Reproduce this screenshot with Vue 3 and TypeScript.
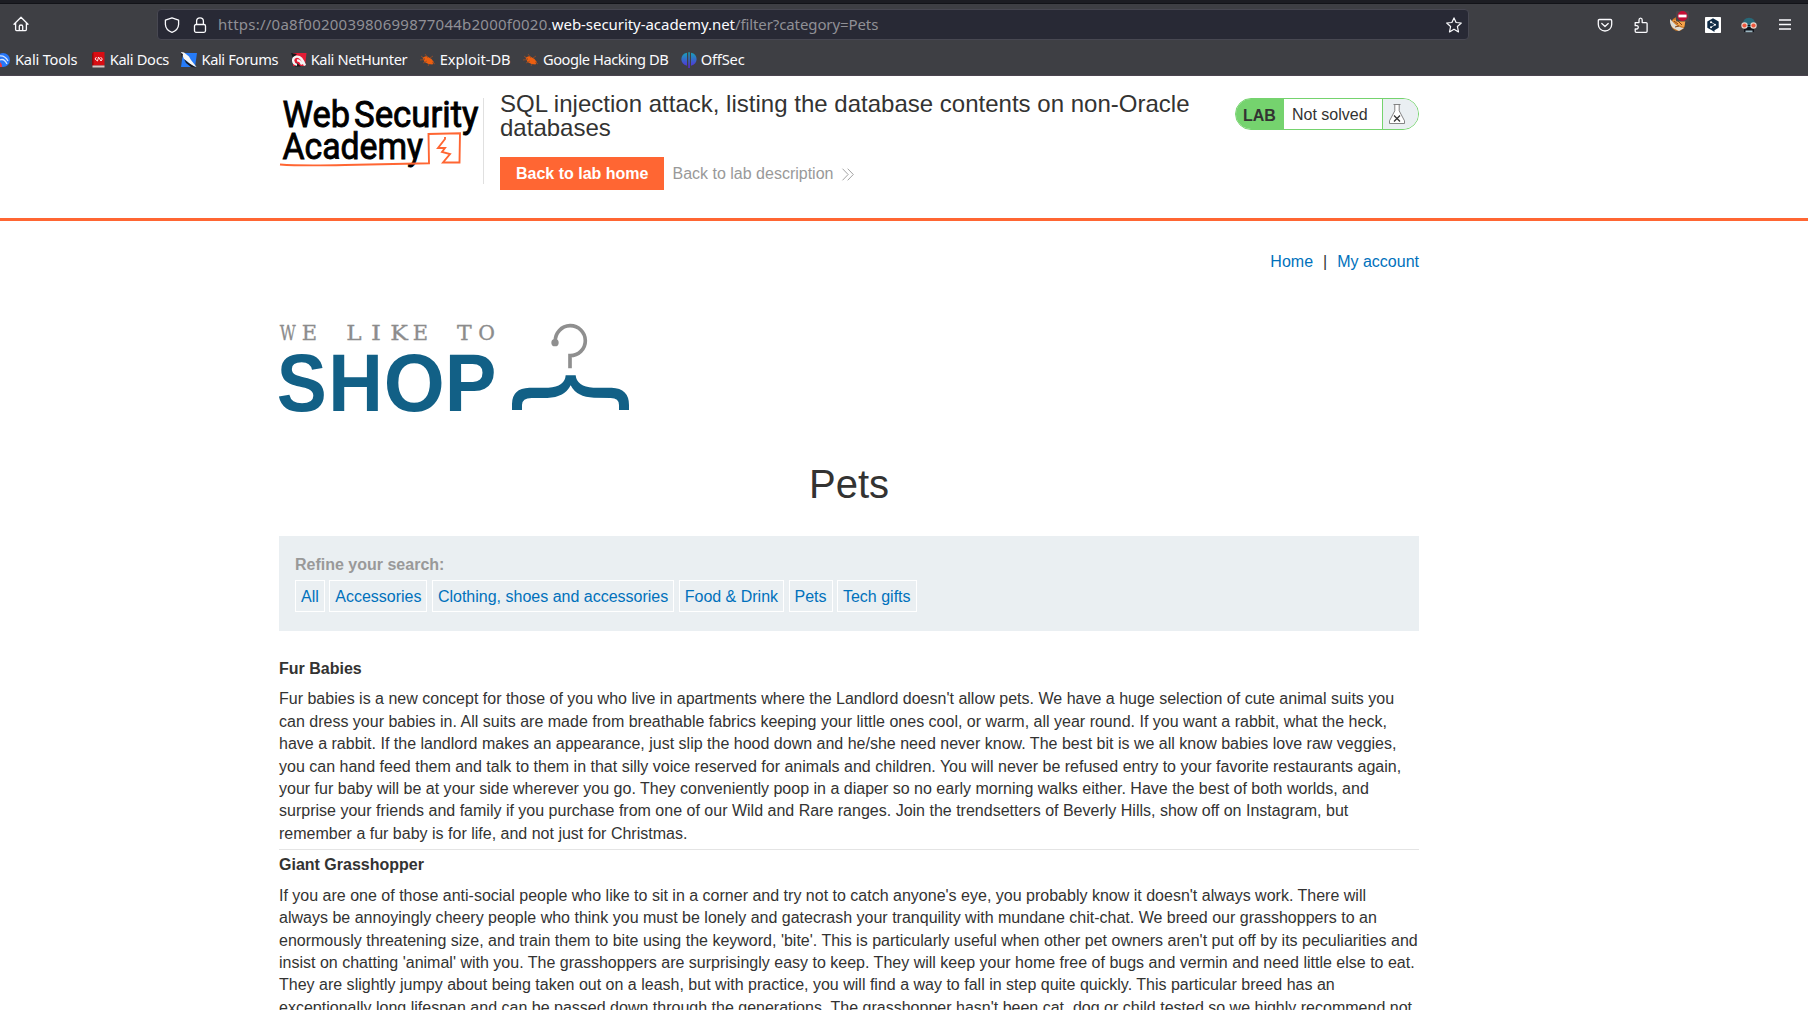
<script setup lang="ts">
interface Bookmark { label: string; icon: string; tracking: number }
interface Product { name: string; description: string }
interface Glyph { ch: string; x: number; w: number }

const bookmarks: Bookmark[] = [
  { label: 'Kali Tools', icon: 'tools', tracking: -0.2 },
  { label: 'Kali Docs', icon: 'docs', tracking: -0.33 },
  { label: 'Kali Forums', icon: 'forums', tracking: -0.38 },
  { label: 'Kali NetHunter', icon: 'nethunter', tracking: -0.38 },
  { label: 'Exploit-DB', icon: 'bug', tracking: -0.07 },
  { label: 'Google Hacking DB', icon: 'bug', tracking: -0.46 },
  { label: 'OffSec', icon: 'offsec', tracking: -0.15 },
]

const categories: string[] = ['All', 'Accessories', 'Clothing, shoes and accessories', 'Food & Drink', 'Pets', 'Tech gifts']

const tagline: Glyph[] = [
  { ch: 'W', x: 29, w: 48 }, { ch: 'E', x: 95, w: 46 }, { ch: 'L', x: 229, w: 46 }, { ch: 'I', x: 303, w: 30 },
  { ch: 'K', x: 361, w: 53 }, { ch: 'E', x: 428, w: 46 }, { ch: 'T', x: 561, w: 44 }, { ch: 'O', x: 625, w: 50 },
]

const wordmark: Glyph[] = [
  { ch: 'S', x: 20, w: 150 }, { ch: 'H', x: 175, w: 164 }, { ch: 'O', x: 341, w: 183 }, { ch: 'P', x: 524, w: 155 },
]

const products: Product[] = [
  {
    name: 'Fur Babies',
    description: "Fur babies is a new concept for those of you who live in apartments where the Landlord doesn't allow pets. We have a huge selection of cute animal suits you can dress your babies in. All suits are made from breathable fabrics keeping your little ones cool, or warm, all year round. If you want a rabbit, what the heck, have a rabbit. If the landlord makes an appearance, just slip the hood down and he/she need never know. The best bit is we all know babies love raw veggies, you can hand feed them and talk to them in that silly voice reserved for animals and children. You will never be refused entry to your favorite restaurants again, your fur baby will be at your side wherever you go. They conveniently poop in a diaper so no early morning walks either. Have the best of both worlds, and surprise your friends and family if you purchase from one of our Wild and Rare ranges. Join the trendsetters of Beverly Hills, show off on Instagram, but remember a fur baby is for life, and not just for Christmas.",
  },
  {
    name: 'Giant Grasshopper',
    description: "If you are one of those anti-social people who like to sit in a corner and try not to catch anyone's eye, you probably know it doesn't always work. There will always be annoyingly cheery people who think you must be lonely and gatecrash your tranquility with mundane chit-chat. We breed our grasshoppers to an enormously threatening size, and train them to bite using the keyword, 'bite'. This is particularly useful when other pet owners aren't put off by its peculiarities and insist on chatting 'animal' with you. The grasshoppers are surprisingly easy to keep. They will keep your home free of bugs and vermin and need little else to eat. They are slightly jumpy about being taken out on a leash, but with practice, you will find a way to fall in step quite quickly. This particular breed has an exceptionally long lifespan and can be passed down through the generations. The grasshopper hasn't been cat, dog or child tested so we highly recommend not",
  },
]
</script>

<template>
  <div class="window">
    <div class="chrome">
      <div class="toolbar">
        <div class="home-btn">
          <svg width="16" height="16" viewBox="0 0 16 16" fill="none" stroke="#fbfbfe" stroke-width="1.3" stroke-linejoin="round" stroke-linecap="round">
            <path d="M1 8.2 8 1.2l7 7M2.6 7v6.6q0 1 1 1h8.800q1 0 1-1V7M6.300 14.500V10.300q0-1.300 1.700-1.300t1.700 1.300v4.200" />
          </svg>
        </div>
        <div class="urlbar">
          <svg class="shield" width="16" height="16" viewBox="0 0 16 16" fill="none" stroke="#fbfbfe" stroke-width="1.300" stroke-linejoin="round">
            <path d="M8 .8 14.600 3.200V7.500C14.400 11 12 13.900 8 15.300 4 13.900 1.600 11 1.400 7.500V3.200Z" />
          </svg>
          <svg class="lock" width="16" height="16" viewBox="0 0 16 16" fill="none" stroke="#fbfbfe" stroke-width="1.300" stroke-linejoin="round">
            <rect x="2.500" y="7.500" width="11" height="7.800" rx="1.500" />
            <path d="M4.600 7.500V4.200a3.400 3.400 0 0 1 6.800 0v3.300" />
          </svg>
          <div class="url"><span class="sub">https://0a8f002003980699877044b2000f0020.</span><b>web-security-academy.net</b><span class="path">/filter?category=Pets</span></div>
          <svg class="star" width="16" height="16" viewBox="0 0 16 16" fill="none" stroke="#fbfbfe" stroke-width="1.200" stroke-linejoin="round">
            <path d="M8 .9 10.100 5.500 15.300 6 11.400 9.500 12.500 14.900 8 12.200 3.500 14.900 4.600 9.500.7 6 5.900 5.500Z" />
          </svg>
        </div>
        <div class="actions">
          <span class="action">
            <svg width="16" height="16" viewBox="0 0 16 16" fill="none" stroke="#fbfbfe" stroke-width="1.300" stroke-linecap="round" stroke-linejoin="round">
              <path d="M2.500 2.500h11q1.200 0 1.200 1.200V7.500a6.700 6.500 0 0 1-13.400 0V3.700q0-1.200 1.200-1.200ZM4.800 6.500 8 9.500l3.200-3" />
            </svg>
          </span>
          <span class="action">
            <svg class="puzzle" width="16" height="16" viewBox="0 0 16 16" fill="none" stroke="#fbfbfe" stroke-width="1.300" stroke-linejoin="round">
              <path d="M2.200 5.600H6V3a1.600 1.900 0 0 1 3.200 0V5.600h3.900q1 0 1 1v7.700q0 1-1 1H3.200q-1 0-1-1V12H4a1.700 1.700 0 0 0 0-3.300H2.200Z" />
            </svg>
          </span>
          <span class="action">
            <svg class="fox" width="20" height="22" viewBox="0 0 20 22">
              <circle cx="9" cy="13" r="7" fill="#c97724" />
              <path d="M1 8q-.5 6 3 9l6 3 5-3q-6-1-9-4Z" fill="#dedbd4" />
              <path d="M4 9q2 5 11 7l2-8Z" fill="#f5a34a" />
              <path d="m5 10 4 3M9 10l4 4m-7 2 4-1" stroke="#7d4116" stroke-width="1" />
              <rect x="7" y="0" width="13" height="10.500" rx="1" fill="#4a4649" />
              <circle cx="13.500" cy="5" r="5" fill="#c50d35" />
              <rect x="9.500" y="3.600" width="8" height="2.800" fill="#fff" />
            </svg>
          </span>
          <span class="action">
            <svg width="16" height="16" viewBox="0 0 16 16">
              <rect width="16" height="16" rx=".7" fill="#fff" />
              <path d="m8 1.200 5.700 3.200v6.400L9.500 13.200V15L6.800 13.300 2.300 10.800V4.400Z" fill="#0f2b46" />
              <path d="m6 5 4 2.700-4 2.700" stroke="#fff" stroke-width=".7" fill="none" />
              <g fill="#fff"><circle cx="6" cy="5.200" r="1" /><circle cx="10" cy="7.700" r="1" /><circle cx="6" cy="10.300" r="1" /></g>
            </svg>
          </span>
          <span class="action">
            <svg width="16" height="16" viewBox="0 0 16 16">
              <path d="M1.700 8Q2 .8 8 .8T14.300 8l-.6 3H2.300Z" fill="#276878" />
              <path d="M3 10h10v5H3Z" fill="#11151c" />
              <path d="M4.500 13.500h7v1.700h-7Z" fill="#9db7c2" />
              <circle cx="3.500" cy="8.500" r="3.200" fill="#e8d4ca" /><circle cx="12.500" cy="8.500" r="3.200" fill="#e8d4ca" />
              <circle cx="3.500" cy="8.500" r="2.100" fill="#ee583f" /><circle cx="12.500" cy="8.500" r="2.100" fill="#ee583f" />
              <path d="M6.700 8h2.600v1H6.700Z" fill="#11151c" />
            </svg>
          </span>
          <span class="action">
            <svg width="16" height="16" viewBox="0 0 16 16" stroke="#fbfbfe" stroke-width="1.300">
              <path d="M2 3h12M2 7.500h12M2 12h12" />
            </svg>
          </span>
        </div>
      </div>

      <div class="bookmarks">
        <span v-for="b in bookmarks" :key="b.label" class="bookmark">
          <svg v-if="b.icon === 'tools'" width="16" height="16" viewBox="0 0 16 16">
            <circle cx="8" cy="8" r="7" fill="#2777f8" />
            <path d="M4 4q6-1 9 5M5 8q4-2 7 4" stroke="#d5e5ff" stroke-width="1.300" fill="none" />
            <path d="M2 10q5-1 5 5H2Z" fill="#f0383f" />
          </svg>
          <svg v-else-if="b.icon === 'docs'" width="16" height="16" viewBox="0 0 16 16">
            <path d="M3.500 0H14.500v13.500H2V2Z" fill="#d90d13" />
            <path d="M2 1.500 3.500 0v13.500H2Z" fill="#8d090d" />
            <path d="M2.500 13.500h12V15.500h-12Z" fill="#d8c8c5" />
            <path d="M6.500 5 5 7l2.500 2 1-4 2.500 4 1.300-2L10.500 5" stroke="#fff" stroke-width=".9" fill="none" />
          </svg>
          <svg v-else-if="b.icon === 'forums'" width="16" height="16" viewBox="0 0 16 16">
            <path d="M2 1h14l-2 14H0Z" fill="#267bf8" />
            <path d="m0 0 3 .5 5 4L10 8l5.500 7Q10 14 7 10L3 7Z" fill="#f5f5f5" />
            <path d="m0 1 2 1-1 4ZM3 7l4 3.500 8 5-5-.500-5-4Z" fill="#18191d" />
          </svg>
          <svg v-else-if="b.icon === 'nethunter'" width="16" height="16" viewBox="0 0 16 16">
            <path d="M2 1h13.500l-1.500 13H2Z" fill="#e31c35" />
            <path d="m0 1 6 1-4 4Zm5.500 9.500 4.500 4H4Z" fill="#17181b" />
            <path d="M6 12.800C1 11.500.8 5.500 5.500 4.600c4-.6 6 3 8.500 8.900M6 8.500q3-.5 5 4" stroke="#f4f4f4" stroke-width="2.300" fill="none" />
          </svg>
          <svg v-else-if="b.icon === 'bug'" width="16" height="16" viewBox="0 0 16 16">
            <path d="m2.500 5.500 4-1.500 5 3 2.300 3-1.300 2.500-4-.5-4-2Z" fill="#ec5f10" />
            <path d="m1 4 4 3M0 8l5-.5M5 2l3 4M3 11l4-2m3-3 3-2m-4 8-1 2m4-4 3 2" stroke="#9c4d25" stroke-width=".8" />
          </svg>
          <svg v-else width="16" height="16" viewBox="0 0 16 16">
            <defs><linearGradient id="offsec" x1="0" y1="0" x2="0" y2="1"><stop offset="0" stop-color="#16a5b8" /><stop offset="1" stop-color="#5a24dc" /></linearGradient></defs>
            <path d="M6 .8V13.700C-1.500 12.500-1.500 2 6 .8ZM10 .8V13.700C17.500 12.500 17.500 2 10 .8ZM7.300.2h1.500V16H7.300Z" fill="url(#offsec)" />
          </svg>
          <span class="name" :style="{ letterSpacing: b.tracking + 'px' }">{{ b.label }}</span>
        </span>
      </div>
    </div>

    <header class="lab-header">
      <div class="container lab-row">
        <svg class="academy" width="204" height="86" viewBox="279 98 204 86">
          <g font-family="Roboto, sans-serif" font-size="37" font-weight="400" fill="#000" stroke="#000" stroke-width=".9">
            <text x="282.500" y="126.500" textLength="67.500" lengthAdjust="spacingAndGlyphs">Web</text>
            <text x="354" y="126.500" textLength="124.500" lengthAdjust="spacingAndGlyphs">Security</text>
            <text x="282.500" y="159" textLength="140.500" lengthAdjust="spacingAndGlyphs">Academy</text>
          </g>
          <path d="M280 164.500Q300 166 345 165T429 163.300L428.500 134 460 133.300 459.500 162.500H443L450 154 442 152 445 148 438 148 445 139V137" fill="none" stroke="#f63" stroke-width="1.900" />
        </svg>
        <div class="title-block">
          <h2>SQL injection attack, listing the database contents on non-Oracle databases</h2>
          <div class="links">
            <a class="btn">Back to lab home</a>
            <a class="back">Back to lab description
              <svg width="12" height="13" viewBox="0 0 12 13" fill="none" stroke="#999" stroke-width=".9"><path d="m.5.700 5.600 5.800-5.600 5.800M5.700.700l5.600 5.800-5.600 5.800" /></svg>
            </a>
          </div>
        </div>
        <div class="status">
          <span class="lab">LAB</span>
          <span class="state">Not solved</span>
          <span class="flask">
            <svg width="16" height="20" viewBox="0 0 16 20" fill="none" stroke="#777" stroke-width=".9">
              <path d="M4.500.500h7M5.800.500v6.300L.500 16.800v2.700h15v-2.700L10.200 6.800V.500" fill="#fff" />
              <path d="m5 11.500 6 6m0-6-6 6" stroke="#333" stroke-width="1.300" />
            </svg>
          </span>
        </div>
      </div>
    </header>

    <main class="container">
      <nav class="account"><a>Home</a><span>|</span><a>My account</a></nav>

      <svg class="shop" width="351" height="92" viewBox="27 36 1053 276">
        <g font-family="'DejaVu Serif', serif" font-size="63" fill="#8c8c8c" stroke="#8c8c8c" stroke-width="1">
          <text v-for="(g, i) in tagline" :key="i" :x="g.x" y="89" :textLength="g.w" lengthAdjust="spacingAndGlyphs">{{ g.ch }}</text>
        </g>
        <g font-family="'Liberation Sans', sans-serif" font-size="243" font-weight="700" fill="#126086">
          <text v-for="g in wordmark" :key="g.ch" :x="g.x" y="302" :textLength="g.w" lengthAdjust="spacingAndGlyphs">{{ g.ch }}</text>
        </g>
        <path d="M856 94A45 45 0 1 1 900 137V175" fill="none" stroke="#8f8f8f" stroke-width="11" />
        <circle cx="855" cy="98" r="11" fill="#8f8f8f" />
        <path d="M726 300V282Q726 235 778 233L835 233Q885 230 887 196H917Q920 230 970 233L1025 233Q1077 235 1077 285V300H1047V285Q1047 264 1022 264L972 263Q920 262 902 226 884 262 832 264L785 264Q756 264 756 285V300Z" fill="#126086" />
      </svg>

      <h1>Pets</h1>

      <section class="filters">
        <label>Refine your search:</label>
        <div class="filter-list"><a v-for="c in categories" :key="c">{{ c }}</a></div>
      </section>

      <section class="products">
        <article v-for="p in products" :key="p.name">
          <h3>{{ p.name }}</h3>
          <p>{{ p.description }}</p>
        </article>
      </section>
    </main>
  </div>
</template>

<style>
body { margin: 0; overflow: hidden; background: #fff; }
</style>

<style scoped>
* { box-sizing: border-box; }
.window { width: 1808px; height: 1010px; overflow: hidden; background: #fff; color: #333332; font: 16px/22.4px "Liberation Sans", Arial, sans-serif; }
svg { display: block; flex: none; overflow: visible; }

.chrome { height: 76px; background: #3e3f44; border-top: 3px solid #1c1d23; border-bottom: 1px solid #4a444f; box-shadow: inset 0 1px #121318; font-family: "Noto Sans", sans-serif; color: #fbfbfe; }
.toolbar { display: flex; height: 42px; padding: 6px 5px 6px 13px; }
.home-btn { flex: none; width: 144px; padding-top: 7px; }
.urlbar { display: flex; flex: none; align-items: center; width: 1312px; height: 31px; padding: 0 6px; background: #282935; border: 1px solid #484852; border-radius: 4px; }
.lock { margin-left: 12px; }
.url { margin: -2px 0 0 10px; flex: 1; font-size: 15px; line-height: 20px; color: #909096; white-space: nowrap; }
.url b { font-weight: 400; color: #fbfbfe; letter-spacing: -.05px; }
.sub { letter-spacing: .24px; }
.path { letter-spacing: -.1px; }
.actions { display: flex; margin-left: auto; }
.action { display: flex; align-items: center; justify-content: center; width: 36px; height: 31px; }
.fox { margin-top: -6px; margin-left: 4px; }
.bookmarks { display: flex; gap: 12.4px; margin-left: -5px; height: 30px; align-items: center; font-size: 14.67px; line-height: 20px; white-space: nowrap; }
.bookmark { display: flex; align-items: center; gap: 4px; }
.name { margin-top: -2px; }

.container { width: 1140px; margin-left: 279px; }
.lab-header { height: 145px; border-bottom: 3px solid #f63; }
.lab-row { display: flex; padding-top: 16px; }
.academy { box-sizing: content-box; margin: 6px 16px 0 0; border-right: 1px solid #e0e0e0; }
.title-block { width: 700px; height: 97px; }
h2 { margin: 0; font-size: 24px; line-height: 24px; font-weight: 400; letter-spacing: .01px; }
.links { display: flex; align-items: center; margin-top: 17px; }
.btn { padding: 0 16px; height: 33px; line-height: 33px; background: #f63; color: #fff; font-weight: 700; white-space: nowrap; }
.back { display: flex; align-items: center; gap: 9px; margin-left: 8px; padding-top: 1px; color: #999; }
.status { display: flex; flex: none; width: 184px; height: 32px; margin: 6px 0 0 auto; border: 1px solid #75d36e; border-radius: 16px; overflow: hidden; line-height: 31px; }
.lab { width: 48px; padding-left: 7px; background: #75d36e; font-weight: 700; line-height: 33px; }
.state { width: 99px; padding-left: 8px; border-right: 1px solid #75d36e; white-space: nowrap; }
.flask { flex: 1; padding: 5px 0 0 6px; background: #eaeff2; }

a { color: #0071bc; }
.account { display: flex; justify-content: flex-end; gap: 10px; padding-top: 30px; height: 101px; }
.shop { height: 92px; }
h1 { margin: 46px 0 0; font-size: 40px; line-height: 48px; font-weight: 400; text-align: center; }
.filters { height: 95px; margin-top: 28px; padding: 18px 16px 0; background: #eaeff2; }
.filters label { display: block; color: #999; font-weight: 700; }
.filter-list { display: flex; gap: 4.45px; margin-top: 4px; }
.filter-list a { height: 32px; padding: 0 5px; border: 1px solid #fff; line-height: 31px; white-space: nowrap; }
.products { padding-top: 27px; }
article:first-child { height: 191px; }
article + article { height: 197px; border-top: 1px solid #e4e4e4; padding-top: 4px; }
article + article p { margin-top: 8.4px; }
h3 { margin: 0; font-size: 16px; line-height: 22.4px; }
p { margin: 8px 0 0; padding-right: 1px; letter-spacing: .004px; }
</style>
